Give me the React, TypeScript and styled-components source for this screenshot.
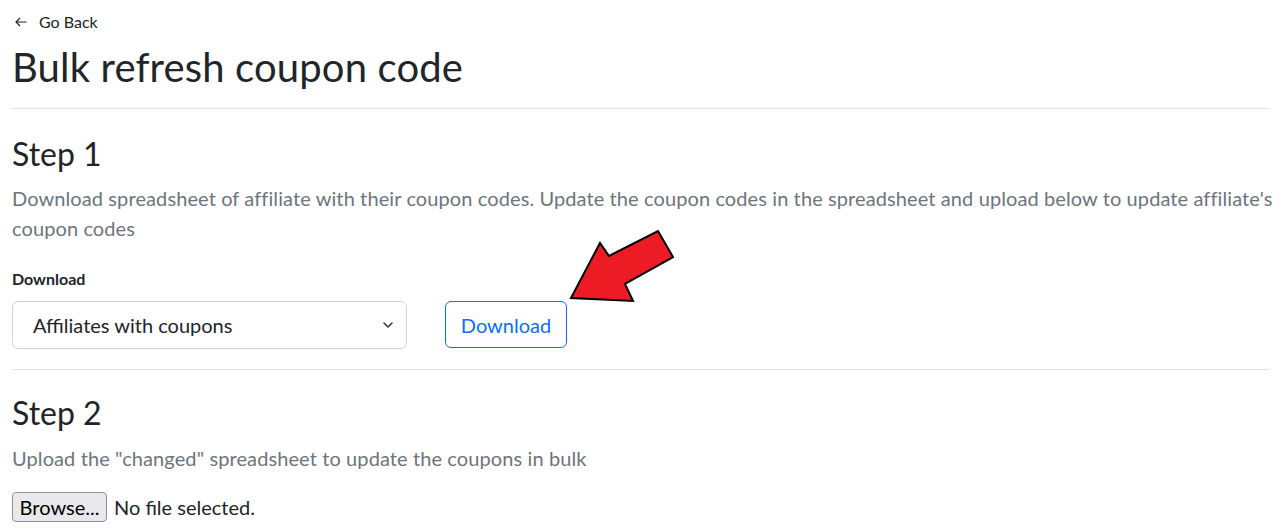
import React from "react";
import styled, { createGlobalStyle } from "styled-components";

const Global = createGlobalStyle`
  html, body { margin: 0; padding: 0; background: #fff; }
  body { font-family: Lato, "Open Sans", sans-serif; color: #212529; }
`;

const Page = styled.div`
  position: relative;
  padding: 0 12px;
`;

const Back = styled.a`
  display: flex;
  align-items: center;
  gap: 12px;
  height: 43px;
  font-size: 16px;
  color: #212529;
  text-decoration: none;
  padding-left: 3px;
`;

const Title = styled.h1`
  margin: 0;
  font-size: 40px;
  font-weight: 400;
  line-height: 48px;
  letter-spacing: 0.15px;
`;

const Rule = styled.hr<{ $top: number; $bottom: number }>`
  border: 0;
  border-top: 1px solid #e3e3e3;
  margin: ${(p) => `${p.$top}px 0 ${p.$bottom}px`};
`;

const StepTitle = styled.h2<{ $bottom: number }>`
  margin: 0 0 ${(p) => p.$bottom}px;
  font-size: 32px;
  font-weight: 400;
  line-height: 38px;
`;

const Lead = styled.p`
  margin: 0 -12px 0 0;
  font-size: 20px;
  line-height: 30px;
  letter-spacing: 0.1px;
  color: #6c757d;
`;

const Label = styled.div`
  margin-top: 24px;
  font-size: 16px;
  font-weight: 700;
  line-height: 24px;
`;

const FormRow = styled.div`
  display: flex;
  align-items: flex-start;
  gap: 38px;
  margin-top: 10px;
`;

const Select = styled.div`
  box-sizing: border-box;
  width: 395px;
  height: 48px;
  display: flex;
  align-items: center;
  justify-content: space-between;
  padding: 0 10px 0 20px;
  border: 1px solid #ced4da;
  border-radius: 6px;
  font-size: 20px;
  color: #212529;
`;

const OutlineButton = styled.button`
  box-sizing: border-box;
  width: 122px;
  height: 47px;
  padding: 0;
  background: #fff;
  border: 1px solid #0d6efd;
  border-radius: 6px;
  color: #0d6efd;
  font-family: inherit;
  font-size: 20px;
`;

const FileRow = styled.div`
  display: flex;
  align-items: center;
  gap: 7px;
  margin-top: 19px;
  font-size: 20px;
`;

const Browse = styled.button`
  box-sizing: border-box;
  height: 30px;
  width: 95px;
  padding: 0;
  background: #e9e9ed;
  border: 1px solid #8f8f9d;
  border-radius: 4px;
  color: #000;
  font-family: inherit;
  font-size: 20px;
  line-height: 28px;
`;

const Pointer = styled.svg`
  position: absolute;
  left: 560px;
  top: 225px;
`;

export default function App() {
  return (
    <Page>
      <Global />
      <Back href="#">
        <svg width="12" height="10" viewBox="0 0 12 10" fill="none" stroke="#212529" strokeWidth="1.2">
          <path d="M11.5 5H1M5 1L1 5l4 4" />
        </svg>
        <span>Go Back</span>
      </Back>
      <Title>Bulk refresh coupon code</Title>
      <Rule $top={17} $bottom={26} />
      <StepTitle $bottom={10}>Step 1</StepTitle>
      <Lead>
        Download spreadsheet of affiliate with their coupon codes. Update the coupon codes in the
        spreadsheet and upload below to update affiliate's coupon codes
      </Lead>
      <Label>Download</Label>
      <FormRow>
        <Select>
          <span>Affiliates with coupons</span>
          <svg width="16" height="12" viewBox="0 0 16 12" fill="none" stroke="#343a40" strokeWidth="1.6" strokeLinecap="round" strokeLinejoin="round">
            <path d="M4 4l4 4 4-4" />
          </svg>
        </Select>
        <OutlineButton>Download</OutlineButton>
      </FormRow>
      <Rule $top={20} $bottom={24} />
      <StepTitle $bottom={11}>Step 2</StepTitle>
      <Lead>Upload the "changed" spreadsheet to update the coupons in bulk</Lead>
      <FileRow>
        <Browse>Browse...</Browse>
        <span>No file selected.</span>
      </FileRow>
      <Pointer width="130" height="90" viewBox="560 225 130 90">
        <polygon
          points="571,298 600,243 609,256 658,231 673,257 625,284 633,301"
          fill="#ed1c24"
          stroke="#000"
          strokeWidth="2"
          strokeLinejoin="miter"
        />
      </Pointer>
    </Page>
  );
}
